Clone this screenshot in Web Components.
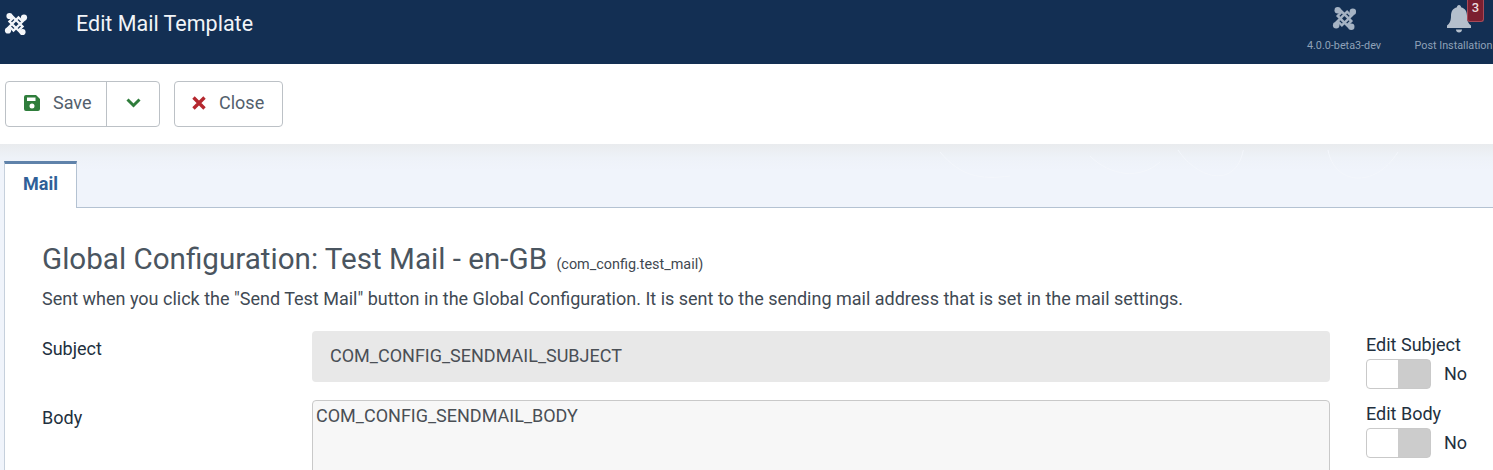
<!DOCTYPE html>
<html>
<head>
<meta charset="utf-8">
<title>Edit Mail Template</title>
<style>
  html, body { margin: 0; height: 470px; overflow: hidden; background: #fff; }
  body { font-family: Roboto, "Liberation Sans", sans-serif; }
</style>
</head>
<body>
<admin-header heading="Edit Mail Template"></admin-header>
<admin-toolbar></admin-toolbar>
<tab-panel label="Mail">
  <template-form></template-form>
</tab-panel>

<script>
const JOOMLA_LOGO = `
  <svg viewBox="0 0 24 24" fill="none" stroke="currentColor" stroke-width="2.400">
    <path d="M7.500 3.500 18.500 14.500 14.500 18.500M20.500 7.500 9.500 18.500 5.500 14.500M16.500 20.500 5.500 9.500 9.500 5.500M3.500 16.500 14.500 5.500 18.500 9.500"/>
    <circle cx="5.500" cy="4" r="3.100" fill="currentColor" stroke="none"/>
    <circle cx="20" cy="5.500" r="3.100" fill="currentColor" stroke="none"/>
    <circle cx="18.500" cy="20" r="3.100" fill="currentColor" stroke="none"/>
    <circle cx="4" cy="18.500" r="3.100" fill="currentColor" stroke="none"/>
  </svg>`;

class AdminHeader extends HTMLElement {
  constructor() {
    super();
    this.shadowDOM = this.attachShadow({mode: 'open'});
  }

  connectedCallback() {
    this.shadowDOM.innerHTML = `
      <style>
        :host { display: flex; height: 64px; background: #132f53; color: #fff; align-items: flex-start; overflow: hidden; }
        .logo { width: 24px; height: 24px; margin: 12px 0 0 4px; color: #f4f6f9; }
        h1 { margin: 10px 0 0 48px; font: 400 21.500px/28px Roboto, sans-serif; flex: 1; color: #f1f4f8; }
        .item { display: flex; flex-direction: column; align-items: center; color: #8fa2b8; font-size: 10.800px; position: relative; }
        .item svg { display: block; }
        .version { width: 74px; margin-right: 33px; padding-top: 6px; }
        .version .icon { width: 25px; height: 25px; color: #a5b3c4; }
        .version span { margin-top: 8px; white-space: nowrap; }
        .post { width: 79px; padding-top: 4px; }
        .post svg { width: 28px; height: 30px; color: #b4bfcc; margin-left: 11px; }
        .post span { margin-top: 5px; white-space: nowrap; }
        .badge { position: absolute; top: -1px; left: 53px; width: 15px; height: 22px; background: #7b1f30; border: 1px solid #a64a58; border-top: 0; border-radius: 0 0 3px 3px; color: #ecdcdc; font: 500 13px/18px Roboto, sans-serif; text-align: center; }
      </style>
      <div class="logo">${JOOMLA_LOGO}</div>
      <h1>${this.getAttribute('heading')}</h1>
      <div class="item version"><div class="icon">${JOOMLA_LOGO}</div><span>4.0.0-beta3-dev</span></div>
      <div class="item post">
        <svg viewBox="0 0 28 30" fill="currentColor"><path d="M14 1c-1.300 0-2 1-2 2.200C7.800 4.200 6 7.500 6 12c0 5-1.500 7.500-4 9.500V24h24v-2.500c-2.500-2-4-4.500-4-9.500 0-4.500-1.800-7.800-6-8.800C16 2 15.300 1 14 1z"/><path d="M11 25.500h6c0 1.800-1.300 3-3 3s-3-1.200-3-3z"/></svg>
        <span>Post Installation</span>
        <div class="badge">3</div>
      </div>
    `;
  }
}

class AdminToolbar extends HTMLElement {
  constructor() {
    super();
    this.shadowDOM = this.attachShadow({mode: 'open'});
  }

  connectedCallback() {
    this.shadowDOM.innerHTML = `
      <style>
        :host { display: flex; height: 80px; box-sizing: border-box; padding: 17px 0 0 5px; gap: 14px; background: #fff; align-items: flex-start; }
        .btn { display: flex; height: 46px; box-sizing: border-box; border: 1px solid #bcc1c6; border-radius: 4px; background: #fff; align-items: center; color: #53606c; font-size: 18px; }
        .btn span { margin-bottom: 3px; }
        .save { width: 155px; }
        .save .main { display: flex; align-items: center; width: 101px; height: 100%; border-right: 1px solid #bcc1c6; padding-left: 18px; box-sizing: border-box; gap: 13px; }
        .save .more { flex: 1; display: flex; justify-content: center; }
        .close { width: 109px; padding-left: 17px; gap: 13px; }
        svg { display: block; margin-bottom: 3px; }
      </style>
      <div class="btn save">
        <div class="main">
          <svg width="16" height="16" viewBox="0 0 16 16"><path fill="#2f7d3b" fill-rule="evenodd" d="M2 0h10l4 4v10a2 2 0 0 1-2 2H2a2 2 0 0 1-2-2V2a2 2 0 0 1 2-2zm1 2.500v3.500h8.500V2.500zM8 8.500a2.500 2.500 0 1 0 0 5 2.500 2.500 0 0 0 0-5z"/></svg>
          <span>Save</span>
        </div>
        <div class="more">
          <svg width="15" height="10" viewBox="0 0 15 10"><path d="M1.500 1.500 7.500 7.500 13.500 1.500" fill="none" stroke="#2f7d3b" stroke-width="3"/></svg>
        </div>
      </div>
      <div class="btn close">
        <svg width="14" height="14" viewBox="0 0 14 14"><path d="M1.500 1.500 12.500 12.500M12.500 1.500 1.500 12.500" fill="none" stroke="#b5282f" stroke-width="3.400"/></svg>
        <span>Close</span>
      </div>
    `;
  }
}

class TabPanel extends HTMLElement {
  constructor() {
    super();
    this.shadowDOM = this.attachShadow({mode: 'open'});
  }

  connectedCallback() {
    this.shadowDOM.innerHTML = `
      <style>
        :host { display: block; background: linear-gradient(#e9ebee 0, #eef2f8 14px, #f0f4fb 26px); padding: 17px 0 0 4px; height: 326px; box-sizing: border-box; overflow: hidden; position: relative; }
        .tabs { display: flex; height: 47px; box-sizing: border-box; border-bottom: 1px solid #b4c2d2; }
        .tab { width: 73px; height: 47px; box-sizing: border-box; background: #fff; border-top: 3px solid #5f82aa; border-right: 1px solid #b4c2d2; border-left: 1px solid #c6d0dc; color: #2f5f98; font: 700 18px/40px Roboto, sans-serif; text-align: center; position: relative; }
        .body { background: #fff; border-left: 1px solid #c6d0dc; padding: 0 0 0 37px; height: 300px; }
        .mark { position: absolute; top: 6px; left: 900px; width: 593px; height: 50px; }
      </style>
      <svg class="mark" viewBox="0 0 593 50" fill="none" stroke="#f4f7fc" stroke-width="1">
        <path d="M40 2c20 24 40 28 70 24M190 6c20 20 50 24 70 6M278 0c20 30 60 40 66 -4M428 0c6 34 46 40 70 2"/>
      </svg>
      <div class="tabs"><div class="tab">${this.getAttribute('label')}</div></div>
      <div class="body"><slot></slot></div>
    `;
  }
}

class ToggleSwitch extends HTMLElement {
  constructor() {
    super();
    this.attachShadow({mode: 'open'}).innerHTML = `
      <style>
        :host { display: block; color: #22303e; font-size: 18px; line-height: 28px; padding-top: 1px; }
        .label { display: block; line-height: 26px; margin-bottom: 1px; }
        .row { display: flex; align-items: center; gap: 13px; }
        .sw { width: 65px; height: 30px; box-sizing: border-box; border: 1px solid #c9c9c9; border-radius: 4px; background: linear-gradient(90deg, #fff 50%, #cccccc 50%); }
      </style>
      <span class="label"><slot></slot></span>
      <div class="row"><div class="sw"></div><span>No</span></div>
    `;
  }
}

class TemplateForm extends HTMLElement {
  constructor() {
    super();
    this.shadowDOM = this.attachShadow({mode: 'open'});
  }

  connectedCallback() {
    this.shadowDOM.innerHTML = `
      <style>
        :host { display: block; color: #495057; }
        h2 { margin: 0; padding-top: 34px; font: 400 29.600px/34px Roboto, sans-serif; color: #4a5560; }
        h2 small { font-size: 14.400px; color: #3f4850; margin-left: 2px; }
        p { margin: 5px 0 0; font-size: 18px; line-height: 24px; color: #3f4a54; }
        .grid { display: grid; grid-template-columns: 270px 1018px 1fr; row-gap: 11px; margin-top: 20px; }
        .label { font-size: 18px; line-height: 24px; color: #22303e; padding-top: 6px; }
        .input { height: 51px; box-sizing: border-box; padding: 0 0 2px 18px; background: #e8e8e8; border-radius: 4px; display: flex; align-items: center; font-size: 18px; color: #4a4f55; }
        .area { height: 120px; box-sizing: border-box; background: #f7f7f7; border: 1px solid #c9c9c9; border-radius: 4px 4px 0 0; padding: 5px 3px; font-size: 18px; line-height: 20px; color: #4a4f55; }
        toggle-switch { margin-left: 36px; }
      </style>
      <h2>Global Configuration: Test Mail - en-GB <small>(com_config.test_mail)</small></h2>
      <p>Sent when you click the "Send Test Mail" button in the Global Configuration. It is sent to the sending mail address that is set in the mail settings.</p>
      <div class="grid">
        <div class="label">Subject</div>
        <div class="input">COM_CONFIG_SENDMAIL_SUBJECT</div>
        <toggle-switch>Edit Subject</toggle-switch>
        <div class="label">Body</div>
        <div class="area">COM_CONFIG_SENDMAIL_BODY</div>
        <toggle-switch>Edit Body</toggle-switch>
      </div>
    `;
  }
}

customElements.define('admin-header', AdminHeader);
customElements.define('admin-toolbar', AdminToolbar);
customElements.define('tab-panel', TabPanel);
customElements.define('toggle-switch', ToggleSwitch);
customElements.define('template-form', TemplateForm);
</script>
</body>
</html>
